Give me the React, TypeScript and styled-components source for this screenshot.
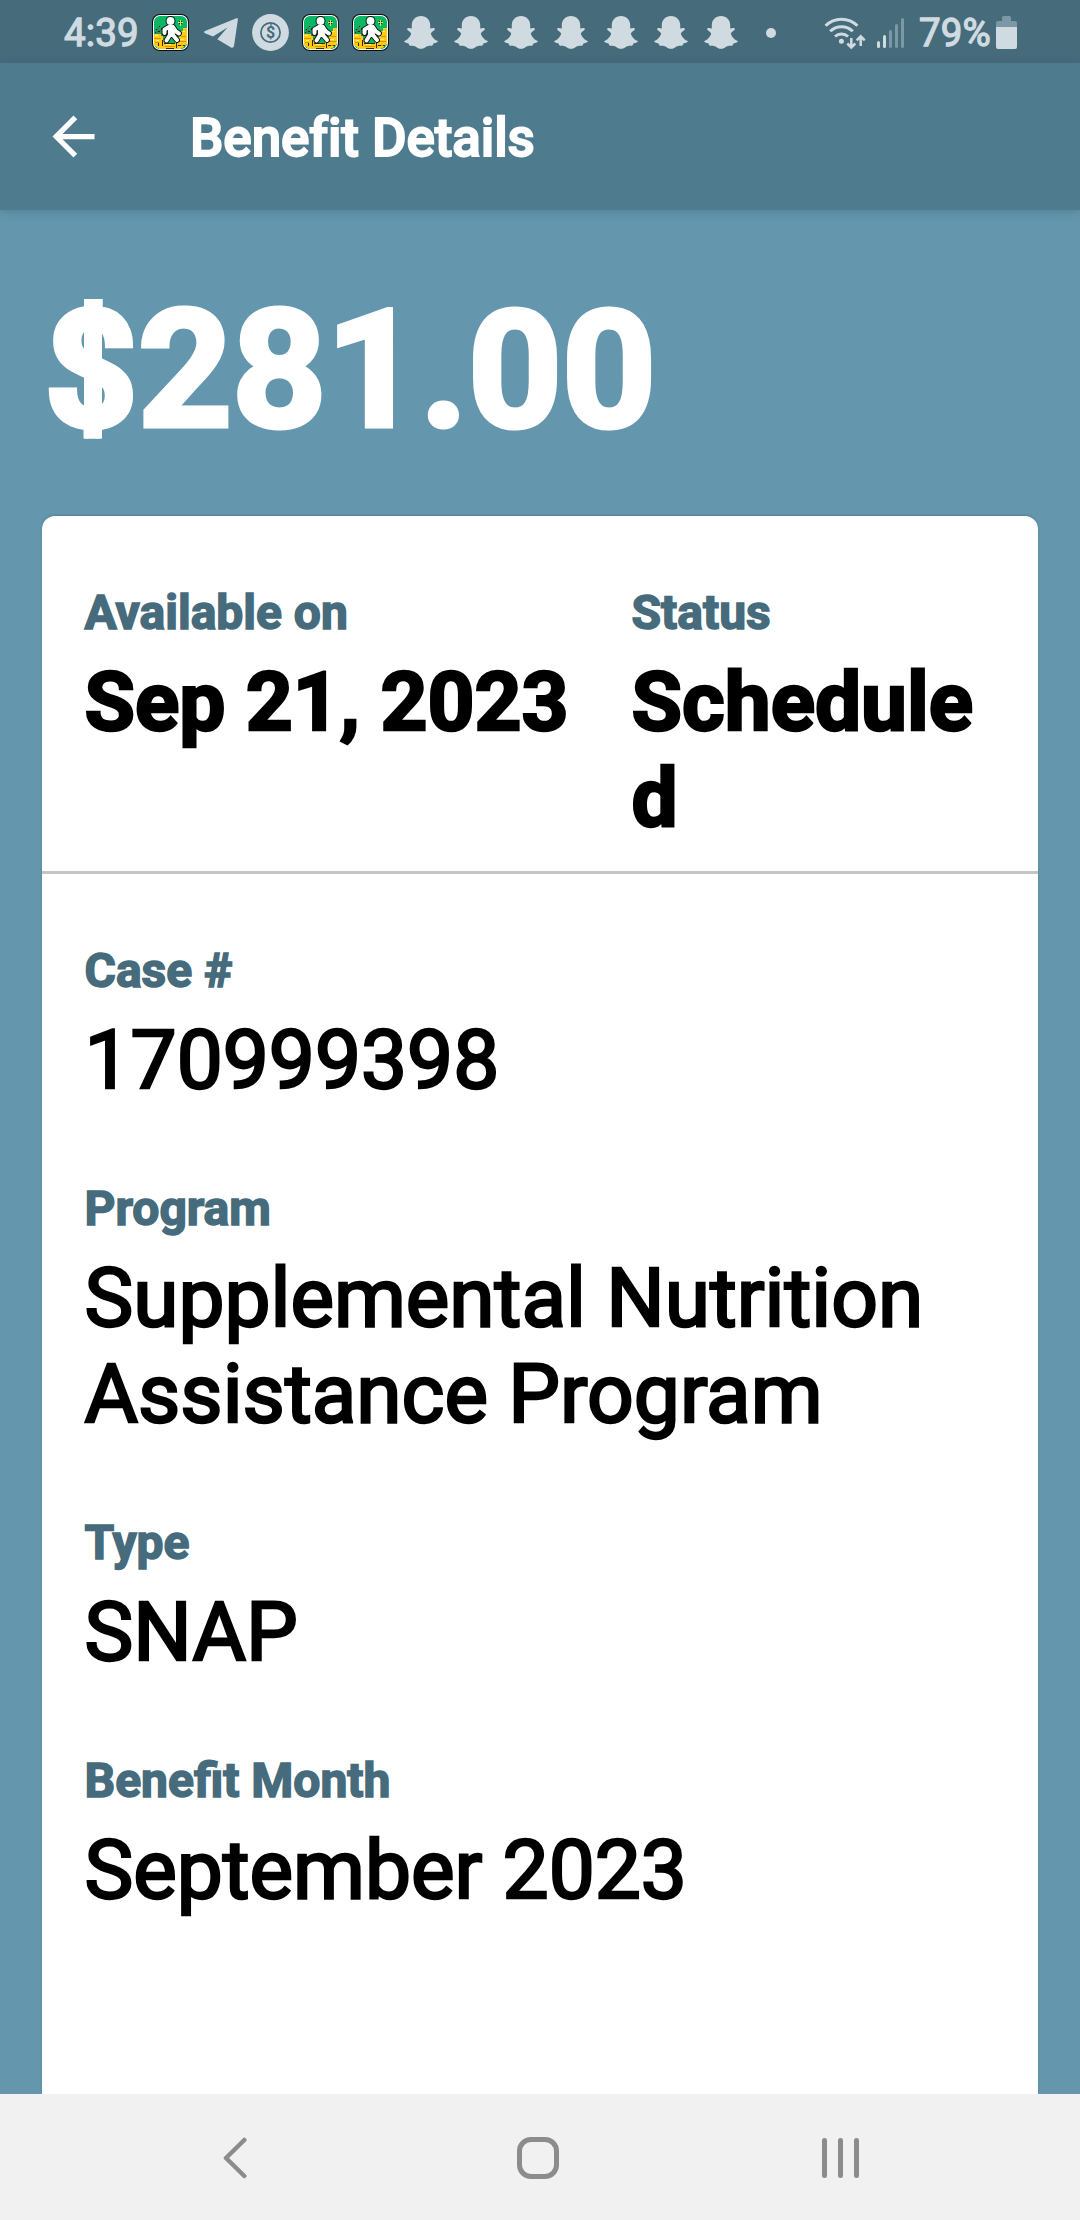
import React from "react";
import styled, { createGlobalStyle } from "styled-components";

const color = {
  status: "#466b7b",
  statusInk: "#d0dbe1",
  statusDim: "#7c98a4",
  header: "#4f7b8e",
  page: "#6497ad",
  label: "#466b7c",
  rule: "#c5c5c5",
  nav: "#f1f1f1",
  navInk: "#8c8c8c",
};

const GlobalStyle = createGlobalStyle`
  body {
    margin: 0;
    background: ${color.page};
    font-family: Roboto, "Noto Sans", sans-serif;
  }
  * { box-sizing: border-box; }
  svg { display: block; flex: none; }
`;

const Screen = styled.div`
  width: 1080px;
  height: 2220px;
  display: flex;
  flex-direction: column;
  background: ${color.page};
  overflow: hidden;
`;

/* ---------- status bar ---------- */

const StatusBar = styled.div`
  flex: none;
  height: 63px;
  display: flex;
  align-items: center;
  padding: 2px 63px 0 63px;
  background: ${color.status};
  color: ${color.statusInk};
`;

const StatusText = styled.span<{ $width: number }>`
  flex: none;
  width: ${(p) => p.$width}px;
  padding: 1px 0 0 1px;
  font-size: 38.500px;
  line-height: 44px;
  letter-spacing: 0.1px;
  white-space: nowrap;
  -webkit-text-stroke: 1.3px currentColor;
`;

const Notifications = styled.div`
  display: grid;
  grid-auto-flow: column;
  grid-auto-columns: 37px;
  column-gap: 13px;
  place-items: center;
  height: 37px;
`;

const MoreDot = styled.i`
  width: 10px;
  height: 10px;
  border-radius: 50%;
  background: ${color.statusInk};
`;

const StatusRight = styled.div`
  margin-left: auto;
  display: flex;
  align-items: center;
  height: 37px;
`;

const Signal = styled.div`
  display: flex;
  align-items: flex-end;
  gap: 3px;
  height: 30px;
  margin: 0 14px 0 11px;
`;

const Bar = styled.i<{ $height: number; $on?: boolean }>`
  width: 3px;
  height: ${(p) => p.$height}px;
  border-radius: 1.5px;
  background: ${(p) => (p.$on ? color.statusInk : color.statusDim)};
`;

const Battery = styled.div`
  display: flex;
  flex-direction: column;
  align-items: center;
  width: 21px;
  height: 33px;
`;

const BatteryCap = styled.i`
  width: 9px;
  height: 5px;
  border-radius: 1.5px 1.5px 0 0;
  background: ${color.statusDim};
`;

const BatteryBody = styled.i`
  width: 21px;
  height: 28px;
  border-radius: 2px;
  background: linear-gradient(${color.statusDim} 6px, ${color.statusInk} 6px);
`;

/* ---------- header ---------- */

const Header = styled.header`
  flex: none;
  height: 147px;
  display: flex;
  align-items: center;
  padding-left: 42px;
  background: ${color.header};
  box-shadow: 0 2px 9px rgba(40, 75, 92, 0.3);
`;

const Title = styled.h1`
  margin: 2px 0 0 85px;
  font-size: 53px;
  font-weight: 500;
  line-height: 62px;
  letter-spacing: -0.1px;
  color: #fff;
  -webkit-text-stroke: 1.8px currentColor;
`;

/* ---------- content ---------- */

const Content = styled.main`
  flex: 1;
  min-height: 0;
  display: flex;
  flex-direction: column;
  padding: 64px 42px 0;
`;

const Amount = styled.div`
  height: 242px;
  flex: none;
  display: flex;
  align-items: flex-start;
  padding-left: 2px;
  font-size: 164px;
  font-weight: 700;
  line-height: 192px;
  color: #fff;
  -webkit-text-stroke: 5.1px currentColor;
`;

/* Dollar sign with short ends and a stroke running through the S. */
const Currency = styled.span`
  position: relative;
  clip-path: inset(25px -4px 27.5px -4px);

  &::after {
    content: "";
    position: absolute;
    top: 25px;
    bottom: 27.5px;
    left: 40px;
    width: 18px;
    background: currentColor;
  }
`;

const Card = styled.section`
  flex: 1;
  min-height: 0;
  display: flex;
  flex-direction: column;
  background: #fff;
  border-radius: 13px 13px 0 0;
  box-shadow: 0 -1px 2px rgba(40, 75, 92, 0.3);
`;

const Summary = styled.div`
  display: grid;
  grid-template-columns: 547px 1fr;
  padding: 69px 42px 25px 42.5px;
  border-bottom: 3px solid ${color.rule};
`;

const Details = styled.div`
  display: flex;
  flex-direction: column;
  gap: 73px;
  padding: 69px 42px 0 42.5px;
`;

const Field = styled.div`
  display: flex;
  flex-direction: column;
  gap: 13px;
`;

const Label = styled.div`
  font-size: 48px;
  font-weight: 700;
  line-height: 56px;
  color: ${color.label};
  -webkit-text-stroke: 1.5px currentColor;
`;

const Value = styled.div<{ $bold?: boolean }>`
  font-size: 82px;
  font-weight: ${(p) => (p.$bold ? 700 : 400)};
  line-height: 96px;
  color: #000;
  overflow-wrap: anywhere;
  -webkit-text-stroke: 2.5px currentColor;
`;

/* ---------- navigation bar ---------- */

const NavBar = styled.nav`
  flex: none;
  position: relative;
  height: 126px;
  display: grid;
  grid-template-columns: repeat(3, 303px);
  place-items: center;
  padding: 2px 0 0 83px;
  background: ${color.nav};
`;

const HomeKey = styled.i`
  width: 42px;
  height: 42px;
  border: 5px solid ${color.navInk};
  border-radius: 14px;
`;

const RecentsKey = styled.div`
  display: flex;
  gap: 11px;
`;

const RecentsLine = styled.i`
  width: 5px;
  height: 40px;
  border-radius: 2.5px;
  background: ${color.navInk};
`;

/* ---------- icons ---------- */

function WalkerIcon() {
  return (
    <svg width="37" height="37" viewBox="0 0 37 37">
      <rect width="37" height="37" rx="8" fill="#0b0f0c" />
      <rect x="1" y="1" width="35" height="35" rx="7" fill="#fff" />
      <rect x="2" y="2" width="33" height="33" rx="6" fill="#0db566" />
      <g shapeRendering="crispEdges">
        <path d="M3 18V15h2v-2h2v2h2v4h3v9H2zM27 22h3v-3h3v8h-6z" fill="#2c8f5c" />
        <path d="M4 15h1v1H4zM7 12h1v1H7zM9 14h1v2H9zM3 18h1v1H3zM6 17h2v1H6z" fill="#0a2a18" />
        <path d="M28 6h1v2h2v1h-2v3h-1V9h-2V8h2z" fill="#e8e24a" />
        <path d="M27 7h1v1h-1zM29 7h1v1h-1zM27 9h1v1h-1zM29 9h1v1h-1z" fill="#0a2a18" />
        <path d="M2 20h7v2h2v4h2v3h10v-2h4v-5h2v-5h2v-3h4v15l-3 4-4 2H8l-4-2-2-3z" fill="#ffcb13" />
        <path d="M2 24h7v1H2zM3 28h4v1H3zM27 27h7v1h-7zM28 31h6v1h-6zM13 32h10v1H13zM29 22h5v1h-5z" fill="#e39300" />
        <path d="M10 26h1v6h-1zM12 29h11v1H12zM24 29h1v5h-1zM26 31h3v1h-3zM31 31h2v1h-2zM6 29h1v3H6zM14 34h8v1h-8z" fill="#3d2600" />
        <path d="M3 21h3v1H3zM4 26h3v1H4zM14 30h5v1h-5zM28 25h4v1h-4zM31 17h2v1h-2z" fill="#fff08a" />
      </g>
      <g strokeLinejoin="round" strokeLinecap="round" fill="none">
        <path d="M17 13L12.500 15.500V19M21 13L24 17.500L27 19.500M18.500 13V20L14.500 26.500M20 20L25 26" stroke="#07130c" strokeWidth="5.800" />
        <circle cx="18.500" cy="7" r="5" fill="#07130c" />
        <path d="M17 13L12.500 15.500V19M21 13L24 17.500L27 19.500M18.500 13V20L14.500 26.500M20 20L25 26" stroke="#fff" strokeWidth="4" />
        <path d="M16 11h6l1 10h-7z" fill="#fff" />
        <circle cx="18.500" cy="7" r="4" fill="#fff" />
      </g>
    </svg>
  );
}

function TelegramIcon() {
  return (
    <svg width="34" height="30" viewBox="0 0 34 30" fill={color.statusInk}>
      <path d="M32.4.3 1 13Q-.8 14.2 1 15.2L9 18.6 23.5 9.5 13.3 21.3 27 29.4Q29.4 30.4 30 28L33.9 1.6Q34-.3 32.4.3Z" />
    </svg>
  );
}

const CoinGlyph = styled.text`
  font: 700 16px Roboto, sans-serif;
  text-anchor: middle;
  fill: ${color.status};
`;

function CoinIcon() {
  return (
    <svg width="37" height="37" viewBox="0 0 37 37">
      <circle cx="18.5" cy="18.5" r="18.4" fill={color.statusInk} />
      <circle cx="18.5" cy="18.5" r="9.6" fill="none" stroke={color.status} strokeWidth="1.7" />
      <CoinGlyph x="18.5" y="24.2">$</CoinGlyph>
    </svg>
  );
}

function GhostIcon() {
  return (
    <svg width="34" height="33" viewBox="0 0 34 33" fill={color.statusInk}>
      <path d="M17 0C11.5 0 7.8 4 7.8 9v3.4C6 12.1 3.7 11.5 3.1 12.8c-.3 1.8 3 2.6 4.1 4.7C6.500 20.500 4 23.600.4 25c-.8 1 1.100 1.800 3.900 2.300.700.700.700 2.200 1.700 2.400 2-.100 4-.200 5.500.800 2 1.500 3.500 2.300 5.500 2.300s3.500-.800 5.500-2.300c1.500-1 3.500-.900 5.500-.800 1-.200 1-1.700 1.700-2.400 2.800-.500 4.700-1.300 3.900-2.300-3.600-1.400-6.100-4.500-6.800-7.500 1.100-2.100 4.400-2.900 4.100-4.700-.6-1.300-2.900-.7-4.700-.4V9C26.200 4 22.500 0 17 0Z" />
    </svg>
  );
}

function WifiIcon() {
  return (
    <svg width="42" height="36" viewBox="0 0 42 36" fill="none" stroke={color.statusInk}>
      <path d="M1.600 10.800A22.500 22.500 0 0 1 33.400 10.800" strokeWidth="3" />
      <path d="M6.200 16.300A16 16 0 0 1 28.800 16.300" strokeWidth="3" />
      <path d="M11 21.500A9.400 9.400 0 0 1 24 21.500" strokeWidth="3" />
      <circle cx="17.400" cy="26.200" r="2.500" fill={color.statusInk} stroke="none" />
      <path d="M27.300 23V32M23.300 28.500l4 4 4-4" strokeWidth="2.500" />
      <path d="M36.700 31V22M32.700 25.300l4-4 4 4" strokeWidth="2.500" />
    </svg>
  );
}

function BackArrow() {
  return (
    <svg width="63" height="63" viewBox="0 0 24 24" fill="#fff">
      <path d="M20 11H7.830l5.590-5.590L12 4l-8 8 8 8 1.410-1.410L7.830 13H20v-2z" />
    </svg>
  );
}

function BackKey() {
  return (
    <svg width="24" height="42" viewBox="0 0 24 42" fill="none" stroke={color.navInk} strokeWidth="4.500" strokeLinecap="round" strokeLinejoin="round">
      <path d="M21.300 3 3 21l18.300 18" />
    </svg>
  );
}

/* ---------- screen ---------- */

const summary = [
  { label: "Available on", value: "Sep 21, 2023" },
  { label: "Status", value: "Scheduled" },
];

const details = [
  { label: "Case #", value: "170999398" },
  { label: "Program", value: "Supplemental Nutrition Assistance Program" },
  { label: "Type", value: "SNAP" },
  { label: "Benefit Month", value: "September 2023" },
];

const signalBars = [
  { height: 7, on: true },
  { height: 13, on: true },
  { height: 18, on: false },
  { height: 24, on: false },
  { height: 30, on: false },
];

export default function App() {
  return (
    <Screen>
      <GlobalStyle />
      <StatusBar>
        <StatusText $width={89}>4:39</StatusText>
        <Notifications>
          <WalkerIcon />
          <TelegramIcon />
          <CoinIcon />
          <WalkerIcon />
          <WalkerIcon />
          {Array.from({ length: 7 }, (_, i) => (
            <GhostIcon key={i} />
          ))}
          <MoreDot />
        </Notifications>
        <StatusRight>
          <WifiIcon />
          <Signal>
            {signalBars.map((b) => (
              <Bar key={b.height} $height={b.height} $on={b.on} />
            ))}
          </Signal>
          <StatusText $width={78}>79%</StatusText>
          <Battery>
            <BatteryCap />
            <BatteryBody />
          </Battery>
        </StatusRight>
      </StatusBar>

      <Header>
        <BackArrow />
        <Title>Benefit Details</Title>
      </Header>

      <Content>
        <Amount>
          <Currency>$</Currency>
          <span>281.00</span>
        </Amount>
        <Card>
          <Summary>
            {summary.map((f) => (
              <Field key={f.label}>
                <Label>{f.label}</Label>
                <Value $bold>{f.value}</Value>
              </Field>
            ))}
          </Summary>
          <Details>
            {details.map((f) => (
              <Field key={f.label}>
                <Label>{f.label}</Label>
                <Value>{f.value}</Value>
              </Field>
            ))}
          </Details>
        </Card>
      </Content>

      <NavBar>
        <BackKey />
        <HomeKey />
        <RecentsKey>
          <RecentsLine />
          <RecentsLine />
          <RecentsLine />
        </RecentsKey>
      </NavBar>
    </Screen>
  );
}
